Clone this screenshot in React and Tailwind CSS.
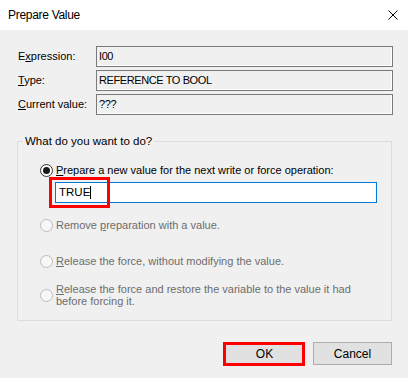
import React from "react";

function Radio({ checked, disabled }) {
  return (
    <span
      className={
        "flex-none w-[13px] h-[13px] rounded-full border flex items-center justify-center " +
        (disabled ? "border-[#bcbcbc] bg-[#f7f7f7]" : "border-[#333333] bg-white")
      }
    >
      {checked && <span className="w-[7px] h-[7px] rounded-full bg-[#1a1a1a]" />}
    </span>
  );
}

function Field({ label, value }) {
  return (
    <div className="flex items-center h-[21px]">
      <div className="w-[96px] flex-none pl-[18px] text-[11px] leading-[13px] text-black whitespace-nowrap">
        {label}
      </div>
      <div className="w-[297px] flex-none h-[21px] border border-[#7a7a7a] shadow-[inset_-1px_-1px_0_#ffffff] flex items-center pl-[2px] text-[11px] tracking-[-0.4px] text-black">
        {value}
      </div>
    </div>
  );
}

export default function App() {
  return (
    <div className="w-[408px] h-[378px] bg-[#f0f0f0] flex flex-col font-['Liberation_Sans',Arial,sans-serif] text-black overflow-hidden">
      <div className="h-[30px] flex-none bg-white flex items-center justify-between pl-[8px] pr-[10px]">
        <span className="text-[12px] tracking-[-0.3px] leading-[14px]">Prepare Value</span>
        <svg width="10" height="10" viewBox="0 0 10 10" className="block">
          <path d="M0.5 0.5 L9.5 9.5 M9.5 0.5 L0.5 9.5" stroke="#000" strokeWidth="1" />
        </svg>
      </div>

      <div className="flex flex-col gap-[3px] mt-[16px]">
        <Field label={<>E<u>x</u>pression:</>} value="I00" />
        <Field label={<><u>T</u>ype:</>} value="REFERENCE TO BOOL" />
        <Field label={<><u>C</u>urrent value:</>} value="???" />
      </div>

      <fieldset className="ml-[17px] w-[375px] mt-[19px] border border-[#dcdcdc] pb-[13px]">
        <legend className="ml-[5px] px-[2px] text-[11.5px] leading-[14px]">What do you want to do?</legend>

        <div className="flex items-center pl-[22px] mt-[15px] text-[11px] leading-[14px]">
          <Radio checked />
          <span className="ml-[3px] whitespace-nowrap">
            <u>P</u>repare a new value for the next write or force operation:
          </span>
        </div>

        <div className="relative ml-[37px] mt-[5px] w-[322px] h-[21px] border border-[#0078d7] bg-white flex items-center pl-[3px] text-[11.5px]">
          <span>TRUE</span>
          <span className="w-[1px] h-[13px] bg-black" />
          <div className="absolute left-[-7px] top-[-6px] w-[61px] h-[31px] border-[3px] border-[#ff0000]" />
        </div>

        <div className="flex items-center pl-[22px] mt-[15px] text-[11px] leading-[14px] text-[#6d6d6d]">
          <Radio disabled />
          <span className="ml-[3px] whitespace-nowrap">
            Remove <u>p</u>reparation with a value.
          </span>
        </div>

        <div className="flex items-center pl-[22px] mt-[22px] text-[11px] leading-[14px] text-[#6d6d6d]">
          <Radio disabled />
          <span className="ml-[3px] whitespace-nowrap">
            <u>R</u>elease the force, without modifying the value.
          </span>
        </div>

        <div className="flex items-center pl-[22px] mt-[15px] text-[11px] leading-[12px] text-[#6d6d6d]">
          <Radio disabled />
          <span className="ml-[3px]">
            <u>R</u>elease the force and restore the variable to the value it had
            <br />
            before forcing it.
          </span>
        </div>
      </fieldset>

      <div className="flex justify-end gap-[9px] pr-[16px] mt-[21px]">
        <div className="relative">
          <button className="w-[79px] h-[23px] bg-[#e1e1e1] border border-[#0078d7] text-[12px] flex items-center justify-center">
            OK
          </button>
          <div className="absolute left-[-2px] top-[0px] w-[82px] h-[24px] border-[3px] border-[#ff0000]" />
        </div>
        <button className="w-[79px] h-[23px] bg-[#e1e1e1] border border-[#adadad] text-[12px] flex items-center justify-center">
          Cancel
        </button>
      </div>
    </div>
  );
}
